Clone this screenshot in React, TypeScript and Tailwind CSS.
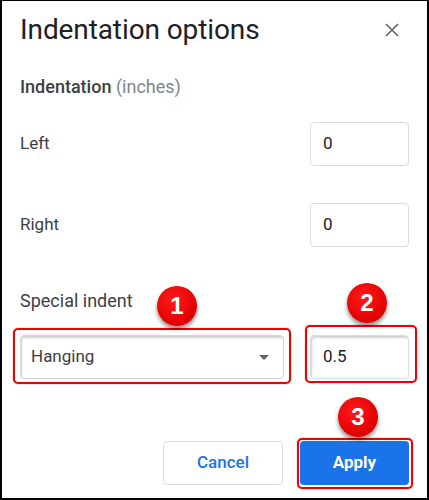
import React from 'react'

function Callout({ n, className }: { n: number; className: string }) {
  return (
    <div
      className={`absolute w-[40px] h-[40px] rounded-full bg-[radial-gradient(circle_at_40%_35%,#ff1a1a,#e00000_70%,#c80000)] shadow-[0_3px_4px_rgba(0,0,0,0.45)] flex items-center justify-center text-white font-bold text-[24px] leading-none font-['Liberation_Sans',Arial,sans-serif] ${className}`}
    >
      {n}
    </div>
  )
}

function NumberBox({ value, inset }: { value: string; inset?: boolean }) {
  return (
    <div
      className={`w-[99px] h-[44px] rounded-[4px] border border-[#dadce0] bg-white flex items-center pl-[12px] text-[17px] text-[#202124] ${inset ? 'shadow-[inset_1px_2px_2px_rgba(0,0,0,0.18)]' : ''}`}
    >
      {value}
    </div>
  )
}

export default function App() {
  return (
    <div className="relative w-[429px] h-[500px] bg-white border-black border-x-2 border-t border-b-2 px-[18px] font-['Roboto','Liberation_Sans',sans-serif] text-[#3c4043]">
      <div className="pt-[11px] h-[47px] flex items-center justify-between">
        <h1 className="text-[28px] leading-[36px] text-[#202124] font-normal tracking-[-0.1px]">Indentation options</h1>
        <svg width="14" height="14" viewBox="0 0 14 14" className="mr-[10px]">
          <path d="M1 1L13 13M13 1L1 13" stroke="#5f6368" strokeWidth="1.6" />
        </svg>
      </div>

      <div className="mt-[27px] text-[18px] leading-[24px]">
        <span className="font-medium text-[#3c4043]">Indentation</span>{' '}
        <span className="text-[#80868b]">(inches)</span>
      </div>

      <div className="mt-[23px] flex items-center justify-between">
        <span className="text-[17px]">Left</span>
        <NumberBox value="0" />
      </div>

      <div className="mt-[37px] flex items-center justify-between">
        <span className="text-[17px]">Right</span>
        <NumberBox value="0" />
      </div>

      <div className="mt-[42px] text-[18px] leading-[24px] text-[#3c4043]">Special indent</div>

      <div className="mt-[22px] flex items-center justify-between">
        <div className="w-[264px] h-[44px] rounded-[4px] border border-[#d3d5d8] bg-white shadow-[inset_1px_2px_2px_rgba(0,0,0,0.18)] flex items-center justify-between pl-[10px] pr-[14px] text-[17px] text-[#3c4043]">
          <span>Hanging</span>
          <svg width="10" height="5" viewBox="0 0 10 5">
            <path d="M0 0H10L5 5Z" fill="#5f6368" />
          </svg>
        </div>
        <NumberBox value="0.5" inset />
      </div>

      <div className="mt-[62px] flex justify-end gap-[17px]">
        <button className="w-[120px] h-[44px] rounded-[4px] border border-[#dadce0] bg-white text-[#1a73e8] text-[17px] font-medium">
          Cancel
        </button>
        <button className="w-[109px] h-[44px] rounded-[4px] bg-[#1a73e8] text-white text-[17px] font-bold">
          Apply
        </button>
      </div>

      {/* annotation boxes */}
      <div className="absolute left-[11px] top-[327px] w-[278px] h-[56px] rounded-[5px] border-2 border-[#f00000] shadow-[0_0_1px_rgba(120,0,0,0.8)]" />
      <div className="absolute left-[303px] top-[324px] w-[112px] h-[58px] rounded-[5px] border-2 border-[#f00000] shadow-[0_0_1px_rgba(120,0,0,0.8)]" />
      <div className="absolute left-[295px] top-[437px] w-[116px] h-[51px] rounded-[5px] border-2 border-[#f00000] shadow-[0_0_1px_rgba(120,0,0,0.8)]" />

      <Callout n={1} className="left-[155px] top-[285px]" />
      <Callout n={2} className="left-[345px] top-[282px]" />
      <Callout n={3} className="left-[336px] top-[396px]" />
    </div>
  )
}
